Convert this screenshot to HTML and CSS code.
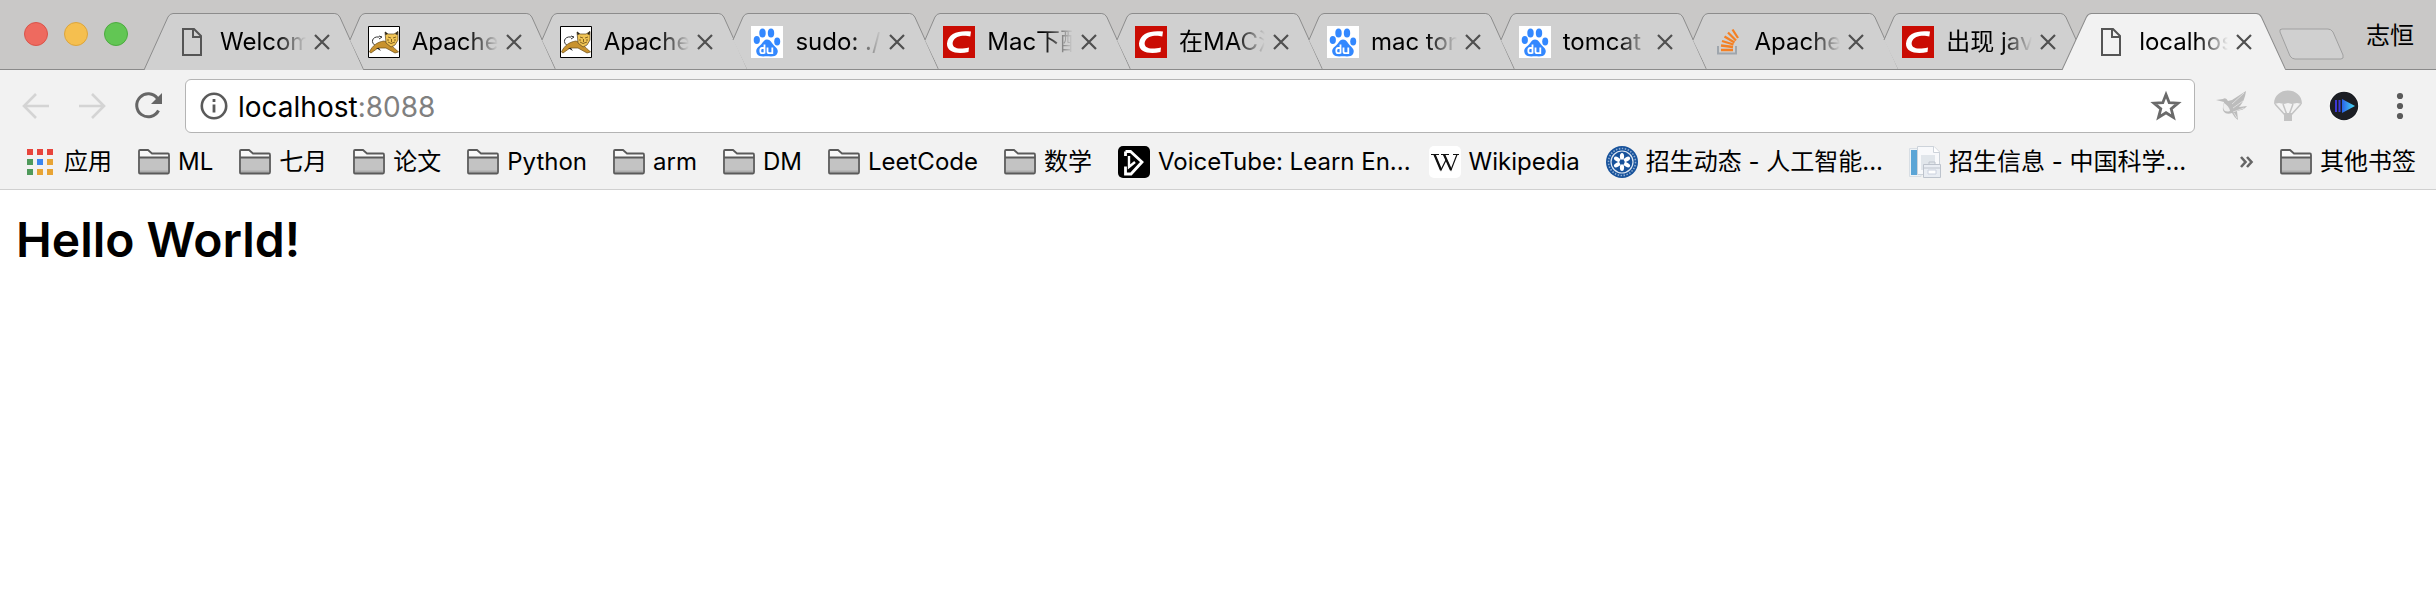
FILE: index.html
```html
<!DOCTYPE html>
<html lang="zh-CN">
<head>
<meta charset="utf-8">
<title>localhost:8088</title>
<link rel="stylesheet" href="styles.css">
</head>
<body>
<svg class="sprite" aria-hidden="true">
  <symbol id="shape-first" viewBox="0 0 220 57" preserveAspectRatio="none"><path d="M0 57L24 4Q26 .5 29 .5H191Q194 .5 196 4L220 57"/></symbol>
  <symbol id="shape-next" viewBox="0 0 220 57" preserveAspectRatio="none"><path class="fill-only" d="M28 56L14 27L24 4Q26 .5 29 .5H191Q194 .5 196 4L220 56"/><path d="M14 27L24 4Q26 .5 29 .5H191Q194 .5 196 4L220 57" fill="none"/></symbol>
  <symbol id="doc" viewBox="0 0 32 32"><path d="M7 3H18L25 10V29H7Z M17 3V11H25" fill="none" stroke="#555" stroke-width="2"/></symbol>
  <symbol id="close" viewBox="0 0 16 16"><path d="M1 1L15 15M15 1L1 15" stroke="#505050" stroke-width="2.2"/></symbol>
  <symbol id="tomcat" viewBox="0 0 32 32">
    <path d="M.5 .5H31.500V31.500H.5Z" fill="#fff" stroke="#000"/>
    <path d="M8 20C2 17 4 10 11 11M11 10l3 1-3 2" fill="none" stroke="#333" stroke-width="1"/>
    <path d="M1.500 26C4 20 9 16 16 15L23 18C25 22 28 23 30.500 26L27 27L18 22L10 22L3 27Z" fill="#c8922e" stroke="#6b4d16" stroke-width=".7"/>
    <path d="M8 22l5 3-2-3" fill="#222"/>
    <path d="M17 6L20 8H26L30 5.500V14L27 19L23 21L18 17Z" fill="#f0c455" stroke="#5c4520" stroke-width=".7"/>
    <path d="M17 5.500l3 2.500-2.500 1zM30 5l-3 3 2.500 1z" fill="#222"/>
    <path d="M20 11l3 1M25 12l3-1M23.500 13v3M20 16l3 1.500 4-1.500M19 14l2 0M26 14l2 0" stroke="#77581d" fill="none" stroke-width=".9"/>
  </symbol>
  <symbol id="baidu" viewBox="0 0 32 32">
    <path d="M0 0H32V32H0Z" fill="#fff"/>
    <g fill="#3388ff"><ellipse cx="11.500" cy="7" rx="3.200" ry="4.500"/><ellipse cx="20" cy="7" rx="3.200" ry="4.500"/><ellipse cx="5.800" cy="14" rx="3.100" ry="4"/><ellipse cx="26.200" cy="15.500" rx="3" ry="4"/>
    <path d="M16 13.500C19.500 13.500 20.500 17 23 19.500C27 23 27.500 25 26 28C24.500 31 20 30.500 16 30.300C12 30.500 8 31 6 28C4 24 6 22 9 19.500C12 17 12.500 13.500 16 13.500Z"/></g>
    <path d="M13.500 18.500V27.500M13.500 22H11Q9.300 22 9.300 24.700Q9.300 27.200 11 27.200H13.500M16.500 21.500V25.500Q16.500 27.200 18.200 27.200H21.300V21.500" fill="none" stroke="#fff" stroke-width="1.800"/>
  </symbol>
  <symbol id="csdn" viewBox="0 0 32 32"><path d="M0 0H32V32H0Z" fill="#ca0c03"/><path d="M28 5.500L27.300 10.500C22 9 12 9 9.800 16C8.500 22 15 24 26 21.500L25.500 26C15 28.500 3.500 26.500 4 17.500C5 7 16 4 28 5.500Z" fill="#fff"/></symbol>
  <symbol id="stack" viewBox="0 0 32 32"><path d="M7 20V27.500H25V20" fill="none" stroke="#9fa6ad" stroke-width="2"/><path d="M10 24H22M10 19.500L22 21M11 15L22.500 18.500M13.500 10.500L23.500 16.500M17 6.500L25 14.500M21.500 3.500L27 12" stroke="#f48024" stroke-width="2.300"/></symbol>
  <symbol id="folder" viewBox="0 0 32 32"><path d="M1 27V5Q1 4 2 4H10L14 7.500H30Q31 7.500 31 9V26Q31 27.500 30 27.500H2Q1 27.500 1 26Z" fill="#f8f8f8"/><path d="M2 11H30V27H2Z" fill="#c3c3c3"/><path d="M2 24.500H30V27H2Z" fill="#adadad"/><path d="M1 26.500V5Q1 4 2 4H10L14 7.500H30Q31 7.500 31 9V26Q31 27.500 30 27.500H2Q1 27.500 1 26.500ZM1 11.500H31" fill="none" stroke="#5a5a5a" stroke-width="1.800"/></symbol>
</svg>

<header class="browser">
  <div class="tab-strip">
    <div class="lights">
      <button class="light red" aria-label="Close window"></button>
      <button class="light yellow" aria-label="Minimize window"></button>
      <button class="light green" aria-label="Zoom window"></button>
    </div>
    <nav class="tabs" aria-label="Tabs">
      <div class="tab"><svg class="shape"><use href="#shape-first"/></svg><svg class="icon"><use href="#doc"/></svg><a class="title" href="#">Welcome</a><button class="close" aria-label="Close tab"><svg><use href="#close"/></svg></button></div>
      <div class="tab"><svg class="shape"><use href="#shape-next"/></svg><svg class="icon"><use href="#tomcat"/></svg><a class="title" href="#">Apache</a><button class="close" aria-label="Close tab"><svg><use href="#close"/></svg></button></div>
      <div class="tab"><svg class="shape"><use href="#shape-next"/></svg><svg class="icon"><use href="#tomcat"/></svg><a class="title" href="#">Apache</a><button class="close" aria-label="Close tab"><svg><use href="#close"/></svg></button></div>
      <div class="tab"><svg class="shape"><use href="#shape-next"/></svg><svg class="icon"><use href="#baidu"/></svg><a class="title" href="#">sudo: ./</a><button class="close" aria-label="Close tab"><svg><use href="#close"/></svg></button></div>
      <div class="tab"><svg class="shape"><use href="#shape-next"/></svg><svg class="icon"><use href="#csdn"/></svg><a class="title" href="#">Mac下配</a><button class="close" aria-label="Close tab"><svg><use href="#close"/></svg></button></div>
      <div class="tab"><svg class="shape"><use href="#shape-next"/></svg><svg class="icon"><use href="#csdn"/></svg><a class="title" href="#">在MAC洋</a><button class="close" aria-label="Close tab"><svg><use href="#close"/></svg></button></div>
      <div class="tab"><svg class="shape"><use href="#shape-next"/></svg><svg class="icon"><use href="#baidu"/></svg><a class="title" href="#">mac tom</a><button class="close" aria-label="Close tab"><svg><use href="#close"/></svg></button></div>
      <div class="tab"><svg class="shape"><use href="#shape-next"/></svg><svg class="icon"><use href="#baidu"/></svg><a class="title" href="#">tomcat</a><button class="close" aria-label="Close tab"><svg><use href="#close"/></svg></button></div>
      <div class="tab"><svg class="shape"><use href="#shape-next"/></svg><svg class="icon"><use href="#stack"/></svg><a class="title" href="#">Apache</a><button class="close" aria-label="Close tab"><svg><use href="#close"/></svg></button></div>
      <div class="tab"><svg class="shape"><use href="#shape-next"/></svg><svg class="icon"><use href="#csdn"/></svg><a class="title" href="#">出现 java</a><button class="close" aria-label="Close tab"><svg><use href="#close"/></svg></button></div>
      <div class="tab active"><svg class="shape"><use href="#shape-first"/></svg><svg class="icon"><use href="#doc"/></svg><a class="title" href="#">localhost</a><button class="close" aria-label="Close tab"><svg><use href="#close"/></svg></button></div>
    </nav>
    <button class="new-tab" aria-label="New tab"><svg viewBox="0 0 68 34"><path d="M4 1H50Q53 1 55 4L65 27Q66 31 63 31H17Q14 31 12 28L2 4Q1 1 4 1Z" fill="#d0d0d0" stroke="#a0a0a0"/></svg></button>
    <button class="profile">志恒</button>
  </div>

  <div class="toolbar">
    <button class="tool" aria-label="Back"><svg viewBox="0 0 32 32"><path d="M29 16H4M16 4L4 16L16 28" fill="none" stroke="#d4d4d4" stroke-width="2.600"/></svg></button>
    <button class="tool" aria-label="Forward"><svg viewBox="0 0 32 32"><path d="M3 16H28M16 4L28 16L16 28" fill="none" stroke="#d4d4d4" stroke-width="2.600"/></svg></button>
    <button class="tool" aria-label="Reload"><svg viewBox="0 0 32 32"><path d="M25.500 8.500A11.500 11.500 0 1 0 26.500 20.500" fill="none" stroke="#666" stroke-width="3"/><path d="M30 3V14H19Z" fill="#666"/></svg></button>
    <form class="address">
      <svg class="info" viewBox="0 0 32 32"><circle cx="16" cy="16" r="12.200" fill="none" stroke="#5a5a5a" stroke-width="2.600"/><path d="M16 9V12M16 14.500V22.500" stroke="#5a5a5a" stroke-width="2.800"/></svg>
      <div class="url" role="textbox" aria-label="Address" contenteditable="true">localhost<span class="port">:8088</span></div>
      <button class="star" type="button" aria-label="Bookmark this page"><svg viewBox="0 0 32 32"><path d="M16 4.500L19.200 12.700L28 13.200L21.200 18.800L23.500 27.500L16 22.700L8.500 27.500L10.800 18.800L4 13.200L12.800 12.700Z" fill="none" stroke="#6a6a6a" stroke-width="2.800"/></svg></button>
    </form>
    <div class="extensions">
      <button class="tool" aria-label="Bird"><svg viewBox="0 0 32 32"><path d="M0 10L7 9Q10 7 12 11L16 10L30 1C29 8 27 13 23 17L31 16C28 20 25 20 21 21L22 30C19 28 18 26 16 23C10 25 6 22 7 17L8 12Z" fill="#bcbcbc"/><path d="M8 13C6 19 8 23 14 21Q13 16 8 13Z" fill="#eee"/><path d="M16 14L28 3M17 18L27 11M17 22L28 18M18 23L21 28" stroke="#dedede" fill="none"/></svg></button>
      <button class="tool" aria-label="Parachute"><svg viewBox="0 0 32 32"><path d="M2 14C2-4 30-4 30 14L25 13L20 14L16 13L12 14L7 13Z" fill="#c3c3c3"/><path d="M3 14L13 25M11 14L15 25M21 14L17 25M29 14L19 25" stroke="#c3c3c3" stroke-width="1.500"/><path d="M12 23H20V31H12Z" fill="#c3c3c3"/></svg></button>
      <button class="tool" aria-label="Player"><svg viewBox="0 0 32 32"><defs><linearGradient id="play"><stop stop-color="#2a62e8"/><stop offset="1" stop-color="#49dff5"/></linearGradient></defs><circle cx="16" cy="16" r="15" fill="#fff"/><circle cx="16" cy="16" r="14.200" fill="#1c1e24"/><path d="M8 10V22M11.500 10V22" stroke="#3d38d6" stroke-width="2"/><path d="M14 9L27 16L14 23Z" fill="url(#play)"/></svg></button>
      <button class="tool" aria-label="Menu"><svg viewBox="0 0 32 32"><g fill="#5a5a5a"><circle cx="16" cy="6" r="3.100"/><circle cx="16" cy="16" r="3.100"/><circle cx="16" cy="26" r="3.100"/></g></svg></button>
    </div>
  </div>

  <nav class="bookmarks" aria-label="Bookmarks">
    <a class="bookmark" href="#"><svg class="icon" viewBox="0 0 32 32"><path d="M3 3h6v6H3zM13 3h6v6h-6zM23 3h6v6h-6z" fill="#e8453c"/><path d="M3 13h6v6H3zM3 23h6v6H3z" fill="#4f9a5b"/><path d="M13 13h6v6h-6z" fill="#3b86f0"/><path d="M23 13h6v6h-6zM13 23h6v6h-6zM23 23h6v6h-6z" fill="#e8a435"/></svg>应用</a>
    <a class="bookmark" href="#"><svg class="icon"><use href="#folder"/></svg>ML</a>
    <a class="bookmark" href="#"><svg class="icon"><use href="#folder"/></svg>七月</a>
    <a class="bookmark" href="#"><svg class="icon"><use href="#folder"/></svg>论文</a>
    <a class="bookmark" href="#"><svg class="icon"><use href="#folder"/></svg>Python</a>
    <a class="bookmark" href="#"><svg class="icon"><use href="#folder"/></svg>arm</a>
    <a class="bookmark" href="#"><svg class="icon"><use href="#folder"/></svg>DM</a>
    <a class="bookmark" href="#"><svg class="icon"><use href="#folder"/></svg>LeetCode</a>
    <a class="bookmark" href="#"><svg class="icon"><use href="#folder"/></svg>数学</a>
    <a class="bookmark clipped" href="#"><svg class="icon" viewBox="0 0 32 32"><rect width="32" height="32" rx="5"/><path d="M7.500 5.500H12.500L24 16L13 28H7.500V20.500M7.500 5.500V10" fill="none" stroke="#fff" stroke-width="2.800"/><path d="M11 10V21L17 16" fill="none" stroke="#fff" stroke-width="2.400"/></svg>VoiceTube: Learn En...</a>
    <a class="bookmark" href="#"><svg class="icon" viewBox="0 0 32 32"><rect width="32" height="32" rx="5" fill="#fff"/><path d="M2 8.500H10M12 8.500H20M24 8.500H30" stroke="#111" stroke-width="1.200"/><path d="M5.500 8.500L12 24L17 14M15 8.500L22 24L28 8.500" fill="none" stroke="#111" stroke-width="1.200"/><path d="M5.500 8.500L12 24M15 8.500L22 24" stroke="#111" stroke-width="2.200"/></svg>Wikipedia</a>
    <a class="bookmark" href="#"><svg class="icon" viewBox="0 0 32 32"><circle cx="16" cy="16" r="16" fill="#17529b"/><circle cx="16" cy="16" r="13.500" fill="none" stroke="#8fadd2" stroke-width="1.600" stroke-dasharray="1.500 1.500"/><circle cx="16" cy="16" r="11" fill="#17529b" stroke="#dce6f2" stroke-width="1.200"/><g fill="#fff"><ellipse cx="16" cy="10.500" rx="2.100" ry="3.600"/><ellipse cx="16" cy="10.500" rx="2.100" ry="3.600" transform="rotate(60 16 16)"/><ellipse cx="16" cy="10.500" rx="2.100" ry="3.600" transform="rotate(120 16 16)"/><ellipse cx="16" cy="10.500" rx="2.100" ry="3.600" transform="rotate(180 16 16)"/><ellipse cx="16" cy="10.500" rx="2.100" ry="3.600" transform="rotate(240 16 16)"/><ellipse cx="16" cy="10.500" rx="2.100" ry="3.600" transform="rotate(300 16 16)"/></g><circle cx="16" cy="16" r="2.500" fill="#17529b"/></svg>招生动态 - 人工智能...</a>
    <a class="bookmark" href="#"><svg class="icon" viewBox="0 0 32 32"><path d="M.5 2.500H12V30.500H.5Z" fill="#eef3f7" stroke="#d8dee4"/><path d="M2 4H8V29H2Z" fill="#5ba5d6"/><path d="M8.500 .5H25L30.500 6V28.500H8.500Z" fill="#f8f9fb" stroke="#cdd3da"/><path d="M24.500 .5V6.500H30.500" fill="#fff" stroke="#cdd3da"/><path d="M12 9H26V24H12Z" fill="#e1e6eb"/><path d="M14.500 18.500H31.500V31.500H14.500Z" fill="#e9edf3" stroke="#bdc3cc"/><path d="M15 22H31M20 18V16H26V18" fill="none" stroke="#bdc3cc"/><path d="M19 24H27V28H19Z" fill="#fff" stroke="#ccd2df"/></svg>招生信息 - 中国科学...</a>
    <button class="more" aria-label="More bookmarks"><svg viewBox="0 0 16 16"><path d="M3 3L7.500 8L3 13M9 3L13.500 8L9 13" fill="none" stroke="#666" stroke-width="2.600"/></svg></button>
    <a class="bookmark" href="#"><svg class="icon"><use href="#folder"/></svg>其他书签</a>
  </nav>
</header>

<main class="page">
  <h1>Hello World!</h1>
</main>
</body>
</html>
```
FILE: styles.css
```css
* { box-sizing: border-box; }

body {
  margin: 0;
  background: #fff;
  color: #000;
  font: 24px/32px Inter, "Noto Sans CJK SC", sans-serif;
}

button {
  display: flex;
  align-items: center;
  justify-content: center;
  flex: none;
  padding: 0;
  border: 0;
  background: none;
  color: inherit;
  font: inherit;
}

a { color: inherit; text-decoration: none; }
svg { display: block; }
.sprite { position: absolute; width: 0; height: 0; }
.icon { flex: none; width: 32px; height: 32px; }

/* Tab strip */
.tab-strip {
  display: flex;
  align-items: flex-end;
  height: 70px;
  padding-right: 22px;
  background: linear-gradient(#8a8a8a, #8a8a8a) bottom / 100% 1px no-repeat, #c9c8c7;
}

.lights {
  display: flex;
  flex: none;
  gap: 16px;
  width: 144px;
  padding: 0 0 24px 24px;
}

.light { width: 24px; height: 24px; border: 1px solid; border-radius: 50%; }
.red { background: #ee6a5f; border-color: #d9544a; }
.yellow { background: #f5bf4f; border-color: #dca53c; }
.green { background: #62c654; border-color: #4cab3f; }

.tabs { display: flex; min-width: 0; }

.tab {
  position: relative;
  display: flex;
  align-items: center;
  width: 220px;
  min-width: 0;
  height: 57px;
  margin-left: -28px;
  padding: 0 34px 0 32px;
}

.tab:first-child { margin-left: 0; }
.tab.active { width: 224px; padding-left: 33px; }

.shape {
  position: absolute;
  inset: 0;
  width: 100%;
  height: 100%;
  fill: #d0d0d0;
  stroke: #8c8c8c;
}

.fill-only { stroke: none; }
.active .shape { fill: #f2f2f2; }
.tab .icon, .title, .close { position: relative; }

.title {
  flex: 1;
  min-width: 0;
  margin: 0 8px 0 12px;
  overflow: hidden;
  white-space: nowrap;
  mask-image: linear-gradient(to right, #000 65%, transparent);
}

.close, .close svg { width: 16px; height: 16px; }
.new-tab { margin: 0 20px 8px -8px; }
.new-tab svg { width: 68px; height: 34px; }
.profile { margin: 0 0 18px auto; }

/* Toolbar */
.toolbar {
  display: flex;
  align-items: center;
  gap: 24px;
  padding: 9px 20px 5px;
  background: #f2f2f2;
}

.tool, .tool svg, .star svg, .info { width: 32px; height: 32px; }

.address {
  display: flex;
  align-items: center;
  flex: 1;
  height: 54px;
  margin: 0 -3px;
  padding: 0 12px;
  border: 1px solid #b4b4b4;
  border-radius: 6px;
  background: #fff;
}

.info { flex: none; }
.url { flex: 1; padding: 2px 0 0 8px; font-size: 28px; outline: 0; }
.port { color: #808080; }
.extensions { display: flex; gap: 24px; }

/* Bookmarks bar */
.bookmarks {
  display: flex;
  align-items: center;
  gap: 26px;
  height: 52px;
  padding: 0 20px 4px 24px;
  border-bottom: 1px solid #d0d0d0;
  background: #f2f2f2;
}

.bookmark {
  display: flex;
  align-items: center;
  gap: 8px;
  flex: none;
  white-space: nowrap;
}

.clipped { margin-right: -8px; }
.more { width: 16px; margin-left: auto; }
.more svg { width: 16px; height: 16px; }

/* Page */
.page { padding: 18px 16px; }
h1 { margin: 0; font-size: 48px; font-weight: 600; line-height: 64px; }
```
